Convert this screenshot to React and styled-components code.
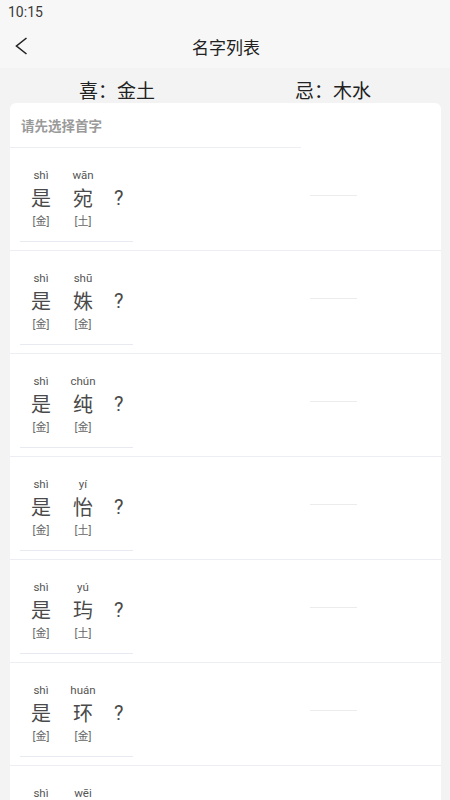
import React from "react";
import styled, { createGlobalStyle } from "styled-components";

const Global = createGlobalStyle`
  html, body { margin: 0; padding: 0; background: #f3f3f3; }
  body { font-family: Roboto, "Noto Sans CJK SC", sans-serif; }
  * { box-sizing: border-box; }
`;

const Page = styled.div`
  width: 450px;
  min-height: 800px;
  background: #f3f3f3;
`;

const StatusBar = styled.div`
  height: 24px;
  background: #f7f7f7;
  padding-left: 8px;
  display: flex;
  align-items: center;
  font-family: Roboto, sans-serif;
  font-size: 14px;
  color: #3a3a3a;
`;

const NavBar = styled.div`
  height: 44px;
  background: #f7f7f7;
  display: grid;
  grid-template-columns: 60px 1fr 60px;
  align-items: center;
`;

const BackBtn = styled.div`
  display: flex;
  align-items: center;
  padding-left: 15px;
  height: 100%;
`;

const Title = styled.div`
  text-align: center;
  font-family: "Noto Sans CJK SC", sans-serif;
  font-size: 17px;
  color: #222;
  margin-left: 2px;
  margin-top: 1px;
`;

const FavorRow = styled.div`
  height: 35px;
  display: flex;
  padding-top: 9px;
`;

const FavorItem = styled.div`
  width: 50%;
  text-align: center;
  font-family: "Noto Sans CJK SC", sans-serif;
  font-size: 19px;
  line-height: 26px;
  color: #222;
  padding-left: ${(p) => p.$padL || 0}px;
  padding-right: ${(p) => p.$padR || 0}px;
`;

const Card = styled.div`
  margin: 0 9px 0 10px;
  background: #fff;
  border-radius: 6px 6px 0 0;
`;

const CardHeader = styled.div`
  height: 44px;
  padding-left: 11px;
  display: flex;
  align-items: center;
  font-family: "Noto Sans CJK SC", sans-serif;
  font-weight: 700;
  font-size: 13.5px;
  color: #9a9a9a;
`;

const HeaderLine = styled.div`
  width: 291px;
  height: 1px;
  background: #eceef3;
`;

const Row = styled.div`
  display: flex;
  border-bottom: 1px solid #eceef4;
`;

const LeftCol = styled.div`
  width: 291px;
  padding: 20px 0 8px 10px;
`;

const NameLine = styled.div`
  display: flex;
  gap: 20px;
  padding-left: 10px;
`;

const CharCol = styled.div`
  width: 22px;
  display: flex;
  flex-direction: column;
  align-items: ${(p) => (p.$left ? "flex-start" : "center")};
`;

const Pinyin = styled.div`
  height: 14px;
  line-height: 14px;
  font-family: Roboto, sans-serif;
  font-size: 11.5px;
  color: #555;
  white-space: nowrap;
`;

const Hanzi = styled.div`
  margin-top: 3px;
  height: 26px;
  line-height: 26px;
  font-family: ${(p) => (p.$latin ? "Roboto, sans-serif" : '"Noto Sans CJK SC", sans-serif')};
  font-size: 20px;
  color: #4a4a4a;
`;

const Element = styled.div`
  margin-top: 3px;
  height: 16px;
  line-height: 16px;
  font-family: Roboto, "Noto Sans CJK SC", sans-serif;
  font-size: 11px;
  color: #666;
  white-space: nowrap;
`;

const NameUnderline = styled.div`
  margin-top: 11px;
  width: 113px;
  height: 1px;
  background: #e8eaf1;
`;

const RightCol = styled.div`
  flex: 1;
  padding: 47px 0 0 9px;
`;

const Placeholder = styled.div`
  width: 47px;
  height: 1px;
  background: #ececec;
`;

const rows = [
  { p: ["shì", "wān"], c: ["是", "宛"], e: ["[金]", "[土]"] },
  { p: ["shì", "shū"], c: ["是", "姝"], e: ["[金]", "[金]"] },
  { p: ["shì", "chún"], c: ["是", "纯"], e: ["[金]", "[金]"] },
  { p: ["shì", "yí"], c: ["是", "怡"], e: ["[金]", "[土]"] },
  { p: ["shì", "yú"], c: ["是", "玙"], e: ["[金]", "[土]"] },
  { p: ["shì", "huán"], c: ["是", "环"], e: ["[金]", "[金]"] },
  { p: ["shì", "wēi"], c: ["是", "葳"], e: ["[金]", "[木]"] },
];

export default function App() {
  return (
    <Page>
      <Global />
      <StatusBar>10:15</StatusBar>
      <NavBar>
        <BackBtn>
          <svg width="14" height="20" viewBox="0 0 14 20">
            <polyline points="11.5,2 1.5,10 11.5,18" fill="none" stroke="#222" strokeWidth="1.6" />
          </svg>
        </BackBtn>
        <Title>名字列表</Title>
        <div />
      </NavBar>
      <FavorRow>
        <FavorItem $padL={9}>喜：金土</FavorItem>
        <FavorItem $padR={9}>忌：木水</FavorItem>
      </FavorRow>
      <Card>
        <CardHeader>请先选择首字</CardHeader>
        <HeaderLine />
        {rows.map((r, i) => (
          <Row key={i}>
            <LeftCol>
              <NameLine>
                {r.c.map((ch, j) => (
                  <CharCol key={j}>
                    <Pinyin>{r.p[j]}</Pinyin>
                    <Hanzi>{ch}</Hanzi>
                    <Element>{r.e[j]}</Element>
                  </CharCol>
                ))}
                <CharCol $left>
                  <Pinyin />
                  <Hanzi $latin>?</Hanzi>
                  <Element />
                </CharCol>
              </NameLine>
              <NameUnderline />
            </LeftCol>
            <RightCol>
              <Placeholder />
            </RightCol>
          </Row>
        ))}
      </Card>
    </Page>
  );
}
